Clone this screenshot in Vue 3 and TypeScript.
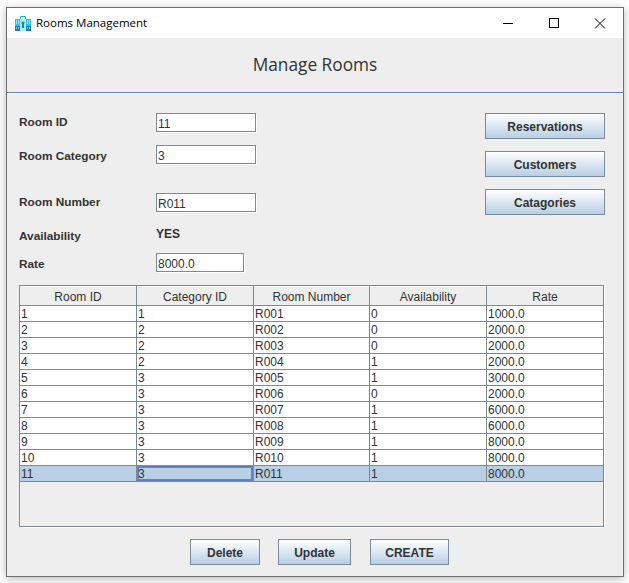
<script setup lang="ts">
type Room = { id: number; category: number; number: string; available: number; rate: string }

const columns = ['Room ID', 'Category ID', 'Room Number', 'Availability', 'Rate']

const rooms: Room[] = [
  { id: 1, category: 1, number: 'R001', available: 0, rate: '1000.0' },
  { id: 2, category: 2, number: 'R002', available: 0, rate: '2000.0' },
  { id: 3, category: 2, number: 'R003', available: 0, rate: '2000.0' },
  { id: 4, category: 2, number: 'R004', available: 1, rate: '2000.0' },
  { id: 5, category: 3, number: 'R005', available: 1, rate: '3000.0' },
  { id: 6, category: 3, number: 'R006', available: 0, rate: '2000.0' },
  { id: 7, category: 3, number: 'R007', available: 1, rate: '6000.0' },
  { id: 8, category: 3, number: 'R008', available: 1, rate: '6000.0' },
  { id: 9, category: 3, number: 'R009', available: 1, rate: '8000.0' },
  { id: 10, category: 3, number: 'R010', available: 1, rate: '8000.0' },
  { id: 11, category: 3, number: 'R011', available: 1, rate: '8000.0' },
]
</script>

<template>
  <div class="desktop">
    <div class="window">
      <div class="titlebar">
        <svg class="app-icon" width="16" height="16" viewBox="0 0 16 16">
          <path d="M5.500 5V1.500H10.500V5" fill="none" stroke="#19b5d8" />
          <rect x="0" y="4" width="16" height="12" fill="#2cc4e0" />
          <rect x="0" y="11" width="16" height="5" fill="#1f7fae" />
          <path d="M1 6h1M3 6h1M1 8h1M3 8h1M12 6h1M14 6h1M12 8h1M14 8h1M1 13h1M3 13h1M12 13h1M14 13h1" stroke="#fff" />
          <path d="M5 4h6v12H5z" fill="#a5ecf3" />
          <circle cx="8" cy="8" r="1.500" fill="#0f87b0" />
          <rect x="7" y="9" width="2" height="4" fill="#0f87b0" />
        </svg>
        <span class="app-title">Rooms Management</span>
        <div class="controls">
          <svg width="46" height="30" viewBox="0 0 46 30"><path d="M18 15.500h10" stroke="#000" /></svg>
          <svg width="46" height="30" viewBox="0 0 46 30"><rect x="18.500" y="10.500" width="9" height="9" fill="none" stroke="#000" /></svg>
          <svg width="46" height="30" viewBox="0 0 46 30"><path d="M18 10.500l10 10M28 10.500l-10 10" stroke="#000" /></svg>
        </div>
      </div>

      <div class="content">
        <header class="heading">Manage Rooms</header>

        <section class="form-area">
          <div class="fields">
            <div class="row row-id">
              <label>Room ID</label>
              <input class="field" value="11" readonly />
            </div>
            <div class="row row-category">
              <label>Room Category</label>
              <input class="field" value="3" readonly />
            </div>
            <div class="row row-number">
              <label>Room Number</label>
              <input class="field" value="R011" readonly />
            </div>
            <div class="row row-avail">
              <label>Availability</label>
              <span class="value">YES</span>
            </div>
            <div class="row row-rate">
              <label>Rate</label>
              <input class="field short" value="8000.0" readonly />
            </div>
          </div>
          <div class="nav-buttons">
            <button class="btn nav">Reservations</button>
            <button class="btn nav">Customers</button>
            <button class="btn nav">Catagories</button>
          </div>
        </section>

        <div class="table-pane">
          <div class="table-row head">
            <div v-for="col in columns" :key="col" class="cell">{{ col }}</div>
          </div>
          <div
            v-for="room in rooms"
            :key="room.id"
            class="table-row"
            :class="{ selected: room.id === 11 }"
          >
            <div class="cell">{{ room.id }}</div>
            <div class="cell" :class="{ focused: room.id === 11 }">{{ room.category }}</div>
            <div class="cell">{{ room.number }}</div>
            <div class="cell">{{ room.available }}</div>
            <div class="cell">{{ room.rate }}</div>
          </div>
        </div>

        <footer class="actions">
          <button class="btn delete">Delete</button>
          <button class="btn update">Update</button>
          <button class="btn create">CREATE</button>
        </footer>
      </div>
    </div>
  </div>
</template>

<style>
html,
body {
  margin: 0;
  background: #fff;
}
</style>

<style scoped>
.desktop {
  width: 629px;
  height: 583px;
  padding: 7px 0 0 6px;
  box-sizing: border-box;
  overflow: hidden;
  font-family: "Liberation Sans", Arial, sans-serif;
  font-size: 12px;
  color: #333;
}

.window {
  width: 618px;
  height: 570px;
  box-sizing: border-box;
  border: 1px solid #6e6e6e;
  background: #eee;
  box-shadow: 0 2px 9px rgba(0, 0, 0, 0.28);
}

.titlebar {
  height: 30px;
  background: #fff;
  display: flex;
  align-items: center;
  padding-left: 8px;
}

.app-icon {
  flex: none;
}

.app-title {
  margin-left: 5px;
  margin-bottom: 2px;
  font-family: "Open Sans", "Noto Sans", sans-serif;
  font-size: 11.500px;
  color: #000;
}

.controls {
  margin-left: auto;
  display: flex;
  margin-right: 0;
}

.controls svg {
  display: block;
}

.heading {
  height: 54px;
  border-bottom: 1px solid #6382bf;
  box-shadow: 0 1px 0 #fff;
  text-align: center;
  line-height: 53px;
  font-family: "Open Sans", "Noto Sans", sans-serif;
  font-size: 17.300px;
  color: #333;
}

.form-area {
  display: flex;
  justify-content: space-between;
  padding: 20px 18px 0 12px;
  height: 192px;
  box-sizing: border-box;
}

.row {
  display: flex;
  align-items: center;
  height: 19px;
}

.row label {
  width: 137px;
  font-weight: bold;
  font-size: 11.800px;
}

.row-category {
  margin-top: 13px;
}

.row-number {
  margin-top: 29px;
}

.row-avail {
  margin-top: 13px;
}

.row-rate {
  margin-top: 9px;
}

.row-id label,
.row-number label {
  position: relative;
  top: -1px;
}

.row-category label {
  position: relative;
  top: 1px;
}

.row-avail label,
.row-rate label {
  position: relative;
  top: 1px;
}

.row-avail .value {
  font-weight: bold;
  position: relative;
  top: -1px;
}

.field {
  width: 100px;
  height: 19px;
  box-sizing: border-box;
  border: 1px solid #7a8a99;
  box-shadow: 1px 1px 0 #fff;
  padding: 2px 1px 0;
  margin: 0;
  background: #fff;
  font-family: "Liberation Sans", Arial, sans-serif;
  font-size: 12px;
  color: #333;
  outline: none;
}

.field.short {
  width: 88px;
}

.nav-buttons {
  display: flex;
  flex-direction: column;
  gap: 12px;
}

.btn {
  box-sizing: border-box;
  height: 26px;
  padding: 2px 0 0;
  border: 1px solid #7a8a99;
  background: linear-gradient(#fff 0%, #e6eef6 35%, #b8cfe5 100%);
  font-family: "Liberation Sans", Arial, sans-serif;
  font-size: 12px;
  font-weight: bold;
  color: #333;
}

.nav {
  width: 120px;
}

.table-pane {
  margin-left: 12px;
  width: 585px;
  height: 242px;
  box-sizing: border-box;
  border: 1px solid #7a8a99;
  box-shadow: 1px 1px 0 #fff;
}

.table-row {
  display: grid;
  grid-template-columns: 117px 117px 116px 117px 117px;
  height: 16px;
  background: #fff;
  border-bottom: 1px solid #7a8a99;
  box-sizing: border-box;
  width: 584px;
}

.table-row.head {
  height: 20px;
  background: #eee;
  box-shadow: inset 0 1px 0 #fff;
}

.table-row.selected {
  background: #b8cfe5;
}

.cell {
  border-right: 1px solid #7a8a99;
  padding-left: 1px;
  line-height: 16px;
  white-space: nowrap;
  overflow: hidden;
  box-sizing: border-box;
}

.head .cell {
  text-align: center;
  line-height: 22px;
  padding-left: 0;
}

.cell.focused {
  box-shadow: inset 0 0 0 2px #6382bf;
}

.actions {
  display: flex;
  padding: 12px 0 0 183px;
}

.delete {
  width: 70px;
}

.update {
  width: 73px;
  margin-left: 18px;
}

.create {
  width: 79px;
  margin-left: 19px;
}
</style>
